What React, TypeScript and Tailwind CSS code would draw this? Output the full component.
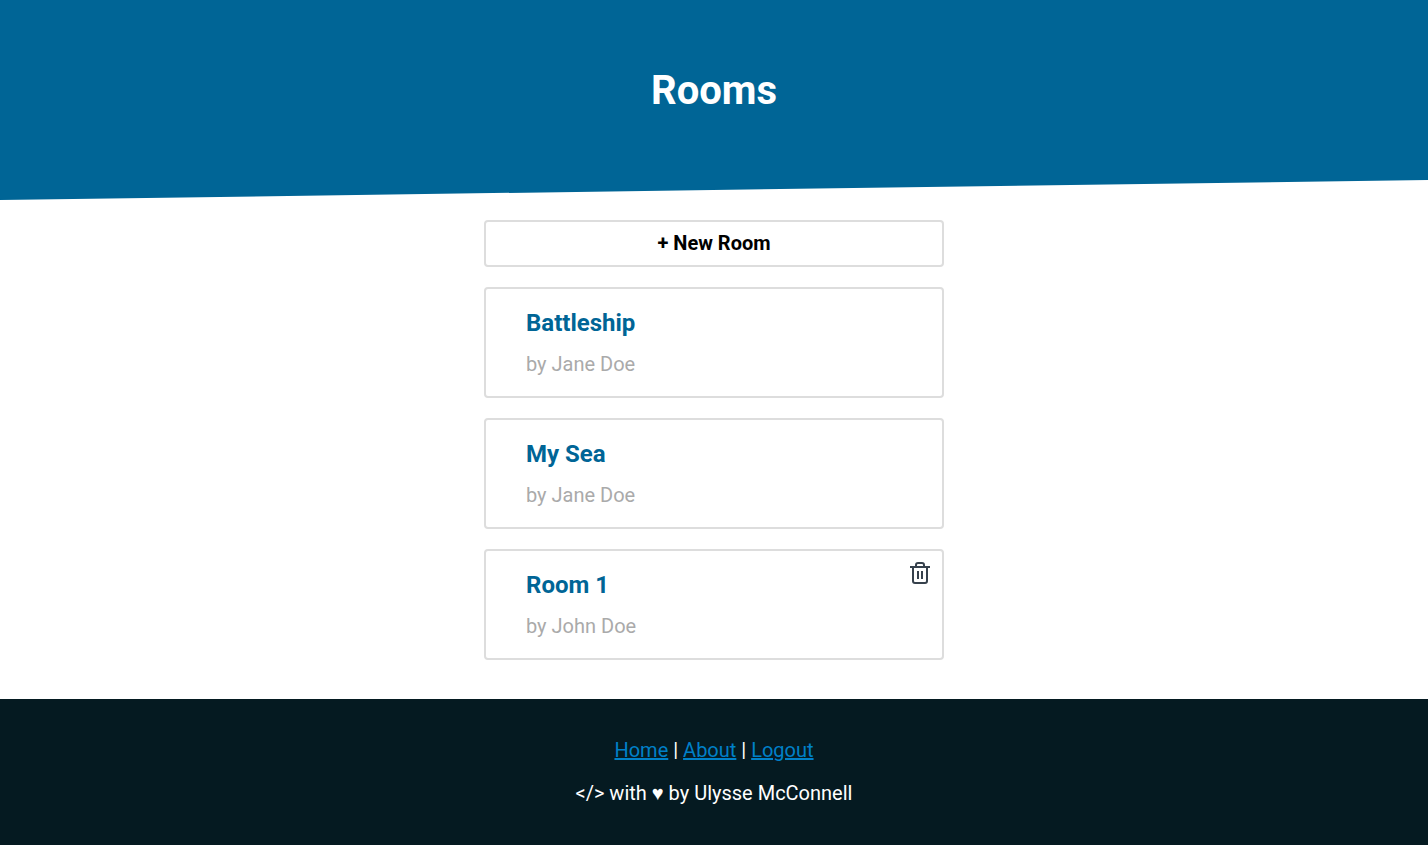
type Room = { name: string; owner: string; removable?: boolean };

const rooms: Room[] = [
  { name: "Battleship", owner: "Jane Doe" },
  { name: "My Sea", owner: "Jane Doe" },
  { name: "Room 1", owner: "John Doe", removable: true },
];

function TrashIcon() {
  return (
    <svg
      className="size-6"
      viewBox="0 0 24 24"
      fill="none"
      stroke="currentColor"
      strokeWidth="2"
      aria-hidden="true"
    >
      <path d="M2 6h20" />
      <path d="M8 6V4a2 2 0 0 1 2-2h4a2 2 0 0 1 2 2v2" />
      <path d="M5 6v14a2 2 0 0 0 2 2h10a2 2 0 0 0 2-2V6" />
      <path d="M10 10v8M14 10v8" />
    </svg>
  );
}

function RoomCard({ room }: { room: Room }) {
  return (
    <li className="relative rounded border-2 border-[#dddddd] px-10 pt-5 pb-[17px]">
      <h2 className="text-2xl leading-7 font-bold text-[#006596]">
        <a href="#room">{room.name}</a>
      </h2>
      <p className="mt-3 leading-[30px] text-[#aaaaaa]">by {room.owner}</p>
      {room.removable && (
        <button
          type="button"
          aria-label={`Delete ${room.name}`}
          className="absolute top-2.5 right-2.5 cursor-pointer text-[#36414c]"
        >
          <TrashIcon />
        </button>
      )}
    </li>
  );
}

export default function App() {
  return (
    <div className="flex min-h-screen flex-col bg-white font-[Roboto,sans-serif] text-xl">
      <header className="bg-[#006596] px-5 pt-[61px] pb-[79px] text-center text-white [clip-path:polygon(0_0,100%_0,100%_90%,0_100%)]">
        <h1 className="text-[40px] leading-[60px] font-bold">Rooms</h1>
      </header>
      <main className="mx-auto flex w-full max-w-[500px] flex-col gap-5 px-5 pt-5 pb-[39px]">
        <button
          type="button"
          className="cursor-pointer rounded border-2 border-[#dddddd] py-2.5 leading-[23px] font-bold text-black"
        >
          + New Room
        </button>
        <ul className="flex flex-col gap-5">
          {rooms.map((room) => (
            <RoomCard key={room.name} room={room} />
          ))}
        </ul>
      </main>
      <footer className="flex grow flex-col gap-5 bg-[#051a21] px-5 py-10 text-center leading-[23px] text-white">
        <nav>
          <a href="#home" className="text-[#0080c8] underline">Home</a>
          {" | "}
          <a href="#about" className="text-[#0080c8] underline">About</a>
          {" | "}
          <a href="#logout" className="text-[#0080c8] underline">Logout</a>
        </nav>
        <p>{"</> with ♥ by Ulysse McConnell"}</p>
      </footer>
    </div>
  );
}
